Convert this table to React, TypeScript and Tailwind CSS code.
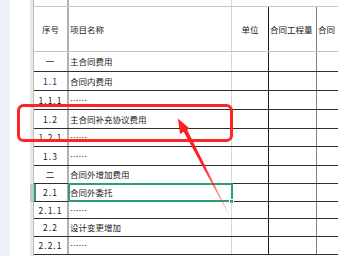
const rows = [
  { no: "一", name: "主合同费用", h: "h-[20px]" },
  { no: "1.1", name: "合同内费用", h: "h-[19px]", blue: true },
  { no: "1.1.1", name: "……", h: "h-[19px]" },
  { no: "1.2", name: "主合同补充协议费用", h: "h-[19px]" },
  { no: "1.2.1", name: "……", h: "h-[18px]" },
  { no: "1.3", name: "……", h: "h-[19px]" },
  { no: "二", name: "合同外增加费用", h: "h-[18px]" },
  { no: "2.1", name: "合同外委托", h: "h-[18px]", selected: true },
  { no: "2.1.1", name: "……", h: "h-[17px]" },
  { no: "2.2", name: "设计变更增加", h: "h-[18px]" },
  { no: "2.2.1", name: "……", h: "h-[18px]" },
];

const font = "font-['Noto_Sans_CJK_SC','Noto_Sans',sans-serif]";
const grid = "grid grid-cols-[35px_163px_37px_48px_1fr]";

function Annotation() {
  return (
    <svg className="absolute inset-0 pointer-events-none" width="338" height="256" viewBox="0 0 338 256">
      <defs>
        <linearGradient id="fade" gradientUnits="userSpaceOnUse" x1="200" y1="165" x2="230" y2="217">
          <stop offset="0" stopColor="#ff1f1f" stopOpacity="1" />
          <stop offset="1" stopColor="#ff1f1f" stopOpacity="0.15" />
        </linearGradient>
      </defs>
      <rect x="18.5" y="105.5" width="213" height="35" rx="5" fill="none" stroke="#ff2424" strokeWidth="3" />
      <polygon points="178,118.5 189.5,128.5 180,134" fill="#ff1f1f" />
      <polygon points="183,130.5 186.5,128.6 229.6,215 229,215.3" fill="url(#fade)" />
    </svg>
  );
}

export default function App() {
  return (
    <div className={`relative flex w-[338px] h-[256px] overflow-hidden bg-white text-[8.5px] text-[#1a1a1a] ${font}`}>
      <div className="w-[10px] shrink-0 bg-[#eef1f6]" />
      <div className="w-[20px] shrink-0" />

      {/* row header strip */}
      <div className="flex flex-col w-[3px] shrink-0 bg-[#e8e8e8]">
        <div className="h-[52px]" />
        {rows.map((r) => (
          <div key={r.no} className={`${r.h} ${r.selected ? "bg-[#c6c6c6]" : ""}`} />
        ))}
      </div>

      <div className="flex flex-col flex-1 border-l border-[#bdbdbd]">
        <div className={`${grid} h-[7px] border-b border-[#c8c8c8]`}>
          <div className="border-r-2 border-[#b0b0b0]" />
          <div className="border-r border-[#d6d6d6]" />
          <div />
          <div />
          <div />
        </div>

        <div className={`${grid} h-[45px] border-b border-[#c4c4c4] items-stretch`}>
          <div className="flex items-center justify-center border-r-2 border-[#b0b0b0]">序号</div>
          <div className="flex items-center pl-[1px] border-r border-[#d6d6d6]">项目名称</div>
          <div className="flex items-center justify-center border-r border-[#1a1a1a]">单位</div>
          <div className="flex items-center pl-[1px] whitespace-nowrap border-r border-[#808080]">合同工程量</div>
          <div className="flex items-center pl-[1px] whitespace-nowrap">合同</div>
        </div>

        {rows.map((r) => (
          <div key={r.no} className={`${grid} ${r.h} border-b border-[#2e2e2e]`}>
            <div
              className={`flex items-center justify-center tracking-[1px] border-r-2 border-[#b0b0b0] ${
                r.blue ? "text-[#2a2a82]" : ""
              } ${r.selected ? "shadow-[inset_2px_0_0_#2f9e6e]" : ""}`}
            >
              {r.no}
            </div>
            <div
              className={`relative flex items-center pl-[1px] whitespace-nowrap border-r border-[#d6d6d6] ${
                r.selected ? "outline-2 outline-[#2f9e6e] -outline-offset-1" : ""
              }`}
            >
              {r.name}
              {r.selected && (
                <span className="absolute right-[-3px] bottom-[-3px] w-[5px] h-[5px] bg-[#2f9e6e] border border-white" />
              )}
            </div>
            <div className="border-r border-[#1a1a1a]" />
            <div className="border-r border-[#808080]" />
            <div />
          </div>
        ))}
      </div>

      <Annotation />
    </div>
  );
}
